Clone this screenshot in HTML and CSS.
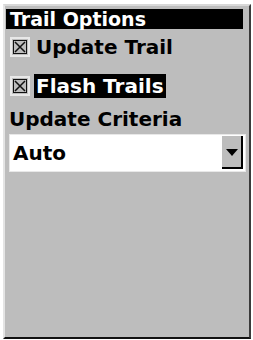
FILE: index.html
```html
<!DOCTYPE html>
<html lang="en">
<head>
    <meta charset="UTF-8">
    <meta name="viewport" content="width=device-width, initial-scale=1.0">
    <title>Trail Options</title>
    <link rel="stylesheet" href="styles.css">
</head>
<body>
    <div class="options-panel">
        <div class="panel-title">Trail Options</div>

        <!-- Trail checkboxes -->
        <div class="option-row">
            <span class="check-box">
                <svg width="14" height="14" viewBox="0 0 14 14"><rect x="0.5" y="0.5" width="13" height="13" fill="none" stroke="#111"/><path d="M2 2L12 12M12 2L2 12" stroke="#111" stroke-width="1.5"/></svg>
            </span>
            <span class="option-label">Update Trail</span>
        </div>
        <div class="option-row">
            <span class="check-box">
                <svg width="14" height="14" viewBox="0 0 14 14"><rect x="0.5" y="0.5" width="13" height="13" fill="none" stroke="#111"/><path d="M2 2L12 12M12 2L2 12" stroke="#111" stroke-width="1.5"/></svg>
            </span>
            <span class="option-label selected">Flash Trails</span>
        </div>

        <!-- Criteria -->
        <div class="section-label">Update Criteria</div>
        <div class="drop-down">
            <span class="drop-value">Auto</span>
            <span class="drop-button">
                <svg width="12" height="8" viewBox="0 0 12 8"><path d="M0 0H12L6 7Z" fill="#000"/></svg>
            </span>
        </div>
    </div>
</body>
</html>
```

FILE: styles.css
```css
* {
    box-sizing: border-box;
    margin: 0;
    padding: 0;
}

body {
    font-family: "DejaVu Sans", Verdana, sans-serif;
    font-weight: bold;
    background-color: #fff;
    width: 253px;
    height: 340px;
    overflow: hidden;
}

.options-panel {
    margin: 4px 0 0 3px;
    width: 248px;
    height: 335px;
    background-color: #bdbdbd;
    border-left: 2px solid #e4e4e4;
    border-top: 2px solid #d8d8d8;
    border-right: 2px solid #3a3a3a;
    border-bottom: 2px solid #111;
    padding: 3px 6px 0 1px;
}

.panel-title {
    background-color: #000;
    color: #fff;
    height: 20px;
    font-size: 19px;
    line-height: 20px;
    padding-left: 4px;
}

.option-row {
    display: flex;
    align-items: center;
    gap: 4px;
    padding-left: 4px;
    height: 24px;
    margin-top: 6px;
}

.option-row + .option-row {
    margin-top: 15px;
}

.check-box {
    width: 20px;
    height: 20px;
    display: flex;
    align-items: center;
    justify-content: center;
    background-color: #bdbdbd;
    border: 2px solid #e8e8e8;
}

.check-box svg {
    display: block;
}

.option-label {
    font-size: 20px;
    line-height: 24px;
    color: #000;
    padding: 0 2px;
}

.option-label.selected {
    background-color: #000;
    color: #fff;
}

.section-label {
    font-size: 20px;
    line-height: 24px;
    margin-top: 9px;
    padding-left: 3px;
}

.drop-down {
    display: flex;
    align-items: stretch;
    margin: 3px 0 0 3px;
    width: 237px;
    height: 38px;
    background-color: #fff;
    border: 1px solid #e8e8e8;
}

.drop-value {
    flex: 1;
    font-size: 20px;
    line-height: 36px;
    padding-left: 3px;
}

.drop-button {
    width: 21px;
    margin: 1px 2px 2px 0;
    background-color: #bdbdbd;
    border-right: 2px solid #000;
    border-bottom: 2px solid #000;
    display: flex;
    justify-content: center;
    padding-top: 13px;
}

.drop-button svg {
    display: block;
}
```
